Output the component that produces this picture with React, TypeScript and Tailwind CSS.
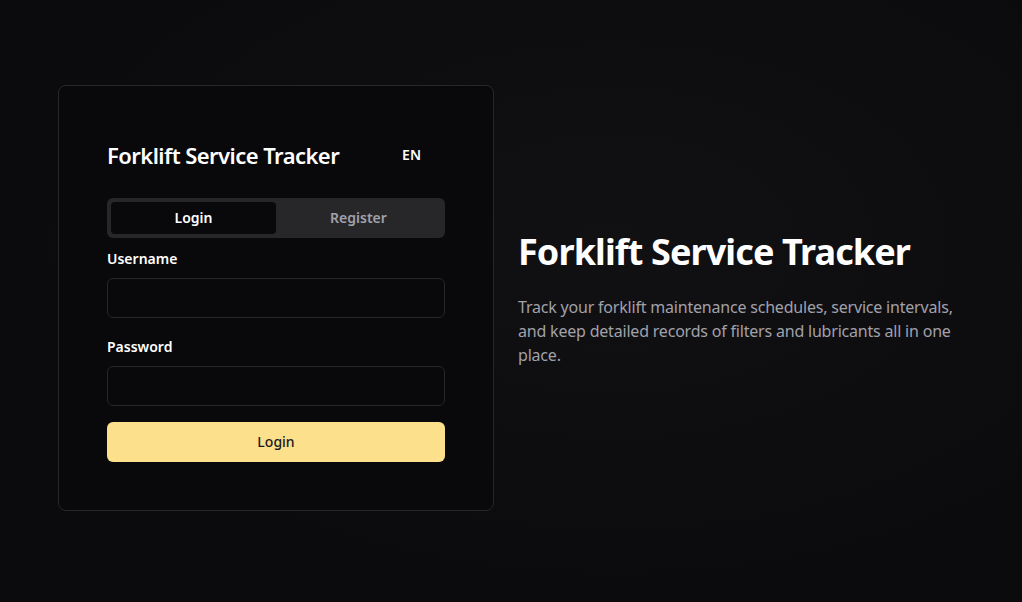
import { useState } from "react";

const FONT = { fontFamily: '"Noto Sans", "Open Sans", sans-serif' };

export default function App() {
  const [tab, setTab] = useState<"login" | "register">("login");

  return (
    <div
      style={FONT}
      className="min-h-screen w-full bg-[#0b0b0d] bg-[radial-gradient(ellipse_at_60%_40%,_#111114,_#0b0b0d_70%)] flex items-center pb-[6px]"
    >
      <div className="w-full px-[58px] grid grid-cols-[436px_1fr] gap-6 items-center">
        {/* Auth card */}
        <div className="rounded-lg border border-[#27272a] bg-[#09090b] p-12">
          <div className="flex items-center justify-between h-[42px]">
            <h2 className="text-[22px] font-semibold text-white tracking-tight">
              Forklift Service Tracker
            </h2>
            <button className="mr-6 text-sm font-semibold text-white">EN</button>
          </div>

          <div className="mt-[22px] grid grid-cols-2 rounded-md bg-[#27272a] p-1 h-10">
            <button
              onClick={() => setTab("login")}
              className={
                tab === "login"
                  ? "rounded-[4px] bg-[#09090b] text-sm font-semibold text-white"
                  : "rounded-[4px] text-sm font-semibold text-[#a1a1aa]"
              }
            >
              Login
            </button>
            <button
              onClick={() => setTab("register")}
              className={
                tab === "register"
                  ? "rounded-[4px] bg-[#09090b] text-sm font-semibold text-white"
                  : "rounded-[4px] text-sm font-semibold text-[#a1a1aa]"
              }
            >
              Register
            </button>
          </div>

          <form className="mt-[11px] flex flex-col" onSubmit={(e) => e.preventDefault()}>
            <label className="text-sm font-semibold text-white leading-5">Username</label>
            <input
              type="text"
              className="mt-[9px] h-10 rounded-md border border-[#27272a] bg-[#09090b] px-3 text-sm text-white outline-none"
            />
            <label className="mt-[19px] text-sm font-semibold text-white leading-5">Password</label>
            <input
              type="password"
              className="mt-[9px] h-10 rounded-md border border-[#27272a] bg-[#09090b] px-3 text-sm text-white outline-none"
            />
            <button
              type="submit"
              className="mt-4 h-10 rounded-md bg-[#fce08c] text-sm font-medium text-[#18181b]"
            >
              Login
            </button>
          </form>
        </div>

        {/* Intro text */}
        <div className="pt-[2px]">
          <h1 className="text-4xl font-bold text-white tracking-tight">
            Forklift Service Tracker
          </h1>
          <p className="mt-[23px] max-w-[436px] text-base leading-6 tracking-[-0.2px] text-[#a1a1aa]">
            Track your forklift maintenance schedules, service intervals, and keep
            detailed records of filters and lubricants all in one place.
          </p>
        </div>
      </div>
    </div>
  );
}
